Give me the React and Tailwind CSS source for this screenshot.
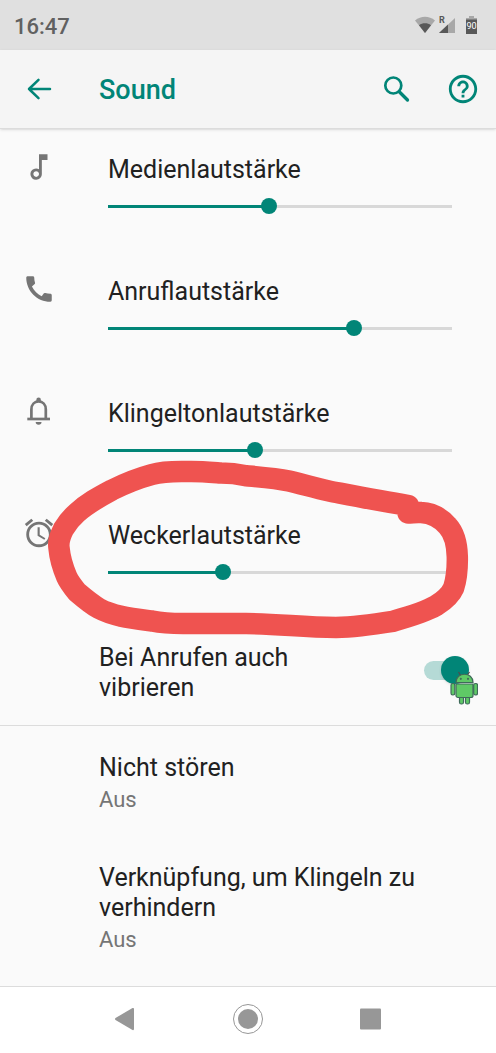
import React, { useState } from "react";
import { MdHelpOutline, MdOutlineMusicNote, MdCall, MdAccessAlarm } from "react-icons/md";

const BellIcon = ({ className }) => (
  <svg className={className} viewBox="0 0 34 34" fill="none" stroke="currentColor" strokeWidth="2.7">
    <path d="M9.4 25V15.5C9.400 10.500 12.500 7.400 16.600 7.400S23.800 10.500 23.800 15.500V25" />
    <path d="M5.300 25H28" />
    <path d="M14.300 8V5.900a2.300 2.300 0 0 1 4.600 0V8z" fill="currentColor" stroke="none" />
    <path d="M13.700 28h5.800a2.900 2.700 0 0 1-5.800 0z" fill="currentColor" stroke="none" />
  </svg>
);

const volumes = [
  { id: "media", label: "Medienlautstärke", icon: MdOutlineMusicNote, level: 7, max: 15 },
  { id: "call", label: "Anruflautstärke", icon: MdCall, level: 5, max: 7 },
  { id: "ring", label: "Klingeltonlautstärke", icon: BellIcon, level: 3, max: 7 },
  { id: "alarm", label: "Weckerlautstärke", icon: MdAccessAlarm, level: 5, max: 15, marked: true },
];

const links = [
  { title: "Nicht stören", status: "Aus" },
  { title: "Verknüpfung, um Klingeln zu verhindern", status: "Aus" },
];

const StatusBar = () => (
  <div className="flex h-[50px] items-center justify-between bg-[#e0e0e0] pl-[14px] pr-[19px] text-[#616161]">
    <span className="pt-[3px] text-[22px] font-medium">16:47</span>
    <div className="flex items-center gap-1">
      <svg className="h-[18px] w-[20px]" viewBox="0 0 20 18">
        <path d="M0 4.500C6-.5 14-.5 20 4.500L10 17z" fill="#a8a8a8" />
        <path d="M4 9.200C7.500 6.700 12.500 6.700 16 9.200L10 17z" fill="#585858" />
      </svg>
      <svg className="h-[18px] w-[16px]" viewBox="0 0 16 18">
        <path d="M16 2v15H0z" fill="#a8a8a8" />
        <path d="M9 8.500V17H0z" fill="#585858" />
        <text x="0" y="7" fontSize="9" fontWeight="700" fill="#585858">R</text>
      </svg>
      <svg className="ml-[7px] h-[18px] w-[11px]" viewBox="0 0 11 18">
        <path d="M3 0h5v2h3v2H0V2h3z" fill="#a8a8a8" />
        <path d="M0 3.500h11V18H0z" fill="#585858" />
        <text x="5.500" y="12.500" fontSize="9" textAnchor="middle" fill="#fff">90</text>
      </svg>
    </div>
  </div>
);

const Header = () => (
  <header className="flex h-[79px] items-center border-b border-[#dcdcdc] bg-[#f5f5f5] pl-[26px] pr-4 text-[#018577] shadow-sm">
    <button type="button" aria-label="Zurück">
      <svg className="h-6 w-[26px]" viewBox="0 0 26 24" fill="none" stroke="currentColor" strokeWidth="2.500" strokeLinecap="round" strokeLinejoin="round">
        <path d="M24 12H3M12.500 2.800L3 12l9.500 9.200" />
      </svg>
    </button>
    <h1 className="ml-[47px] flex-1 pt-[3px] text-[27px] font-medium">Sound</h1>
    <button type="button" aria-label="Suchen">
      <svg className="h-7 w-7" viewBox="0 0 28 28" fill="none" stroke="currentColor" strokeWidth="2.700">
        <circle cx="11.300" cy="10.500" r="8" />
        <path d="M17.500 17l8 8" strokeWidth="3.300" strokeLinecap="round" />
      </svg>
    </button>
    <button type="button" aria-label="Hilfe" className="ml-9">
      <MdHelpOutline className="h-[34px] w-[34px]" />
    </button>
  </header>
);

// Hand drawn ring around a volume row
const Marker = () => (
  <svg
    className="pointer-events-none absolute left-0 top-[-35px] z-10 h-[180px] w-full"
    viewBox="0 460 496 180"
    fill="none"
    stroke="#ef5350"
    strokeWidth="21.500"
    strokeLinecap="round"
    strokeLinejoin="round"
  >
    <path d="M408.500 505.500C380 501 355 496 329 491C315 488 302 484 289 481C275 478 260 477 246 475.700C238 474 230 473 221 473C208 472 197 471 187 471.500C174 471.500 164 471 152 474.500C139 478 126 483 112 490C97 498 88 503 77 512.700C71 518 67 523 63.500 529C60 536 58 541 59 548C60 559 63 568 66.700 576.700C69 582 73 587 77 592C84 598 91 604 99 608.500C113 616 130 618 152 621C162 623 173 623.500 183 623.500H246C282 624 303 627.500 336 627.500C356 627 376 624 392.700 621.300C408 617 423 613 436 605.700C445 600 451 594 453.700 587.700C457 577 457.500 567 457.300 556.700C457 545 455 534 447.700 526C440 517 432 513 421 512.500C416 512 412 513 408 513" />
  </svg>
);

const VolumeRow = ({ id, label, icon: Icon, level, max, marked }) => {
  const [value, setValue] = useState(level);

  return (
    <div className="relative flex items-start pb-[33px] pl-[22px] pr-11">
      <Icon className="mt-[21px] h-[34px] w-[34px] text-[#757575]" />
      <div className="ml-[52px] flex-1 pt-[26px]">
        <label htmlFor={id} className="block text-[25px] leading-[30px]">
          {label}
        </label>
        <div className="mt-[9px] grid h-6 items-center">
          <div className="h-[3px] bg-[#d8d8d8] [grid-area:1/1]">
            <div className="h-full bg-[#018577]" style={{ width: `${(value / max) * 100}%` }} />
          </div>
          <input
            type="range"
            id={id}
            min="0"
            max={max}
            value={value}
            onChange={(e) => setValue(Number(e.target.value))}
            className="-mx-2 h-4 appearance-none bg-transparent [grid-area:1/1] [&::-webkit-slider-thumb]:h-4 [&::-webkit-slider-thumb]:w-4 [&::-webkit-slider-thumb]:appearance-none [&::-webkit-slider-thumb]:rounded-full [&::-webkit-slider-thumb]:bg-[#018577]"
          />
        </div>
      </div>
      {marked && <Marker />}
    </div>
  );
};

const AndroidBadge = () => (
  <svg className="pointer-events-none absolute left-[26px] top-[15px] h-[34px] w-[28px]" viewBox="0 0 28 34" fill="#5fc966" stroke="#3f6b5a" strokeWidth="1.200">
    <path d="M8.500 1l2.500 4M19.500 1L17 4.500" stroke="#54494c" />
    <rect x="9.500" y="22" width="4" height="11" rx="1.800" />
    <rect x="15.500" y="22" width="4" height="11" rx="1.800" />
    <rect x="1" y="12.500" width="3.800" height="11.500" rx="1.700" />
    <rect x="23.700" y="12.500" width="3.800" height="11.500" rx="1.700" />
    <path d="M6 13h17v11.500a2 2 0 0 1-2 2H8a2 2 0 0 1-2-2z" />
    <path d="M6 11.500c0-11 17-11 17 0z" />
    <circle cx="10.800" cy="7.800" r=".5" />
    <circle cx="18" cy="7.800" r=".5" />
  </svg>
);

const VibrateRow = () => {
  const [on, setOn] = useState(true);

  return (
    <div className="flex items-start justify-between border-b border-[#dcdcdc] pb-[22px] pl-[99px] pr-[26px] pt-[26px]">
      <label htmlFor="vibrate" className="max-w-[240px] text-[25px] leading-[30px]">
        Bei Anrufen auch vibrieren
      </label>
      <div className="relative mt-[13px] flex h-7 w-[46px] items-center">
        <input
          type="checkbox"
          id="vibrate"
          checked={on}
          onChange={() => setOn(!on)}
          className="peer h-[19px] w-[38px] appearance-none rounded-full bg-gray-300 checked:bg-[#b5dad6]"
        />
        <span className="pointer-events-none absolute left-0 h-7 w-7 rounded-full bg-white shadow peer-checked:left-[17px] peer-checked:bg-[#018577]" />
        <AndroidBadge />
      </div>
    </div>
  );
};

const NavBar = () => (
  <nav className="flex h-[67px] items-center justify-around border-t border-[#dcdcdc] bg-white px-16 pb-[2px] text-[#979797]">
    <button type="button" aria-label="Zurück">
      <svg className="h-8 w-8" viewBox="0 0 32 32" fill="currentColor">
        <path d="M6.500 15Q5.500 16 6.500 17L23.500 27Q25 27.500 25 26V6Q25 4.500 23.500 5z" />
      </svg>
    </button>
    <button type="button" aria-label="Startseite">
      <svg className="h-8 w-8" viewBox="0 0 32 32" fill="currentColor">
        <circle cx="16" cy="16" r="14.500" fill="none" stroke="currentColor" />
        <circle cx="16" cy="16" r="10" />
      </svg>
    </button>
    <button type="button" aria-label="Übersicht">
      <svg className="h-8 w-8" viewBox="0 0 32 32" fill="currentColor">
        <rect x="5" y="5.500" width="21" height="21" rx="1" />
      </svg>
    </button>
  </nav>
);

const App = () => {
  return (
    <div className="flex min-h-screen flex-col bg-[#fafafa] font-[Roboto,sans-serif] text-[#212121]">
      <StatusBar />
      <Header />
      <main className="flex-1">
        {volumes.map((v) => (
          <VolumeRow key={v.id} {...v} />
        ))}
        <VibrateRow />
        {links.map((item) => (
          <a key={item.title} href="#" className="block pb-[23px] pl-[99px] pr-[60px] pt-[27px]">
            <span className="block text-[25px] leading-[30px]">{item.title}</span>
            <span className="mt-[3px] block text-[22px] leading-[27px] text-[#757575]">{item.status}</span>
          </a>
        ))}
      </main>
      <NavBar />
    </div>
  );
};

export default App;
